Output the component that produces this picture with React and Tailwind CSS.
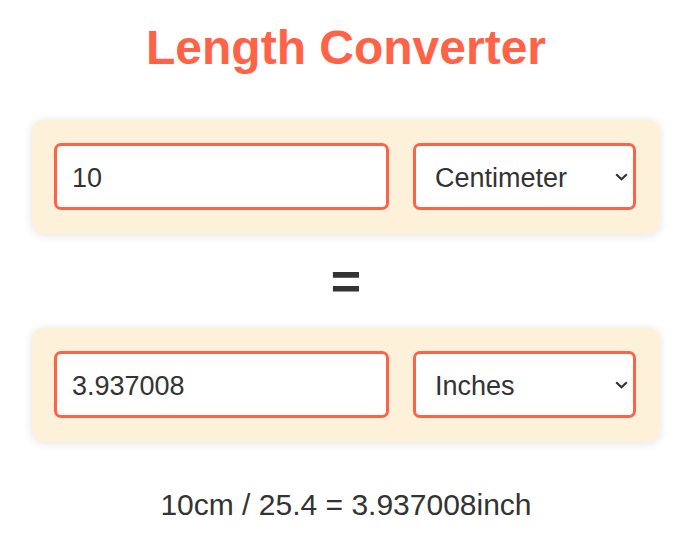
import React, { useState } from "react";

const FACTORS = {
  Centimeter: 1,
  Inches: 2.54,
};

function Chevron() {
  return (
    <svg
      className="pointer-events-none absolute right-[8px] top-1/2 -translate-y-1/2"
      width="13"
      height="8"
      viewBox="0 0 13 8"
      fill="none"
    >
      <path d="M1.2 1.2 L6.5 6.3 L11.8 1.2" stroke="#333" strokeWidth="2.2" />
    </svg>
  );
}

function UnitRow({ value, unit, onValue, onUnit }) {
  return (
    <div className="w-full flex gap-[24px] pl-[22px] pr-[24px] pt-[23px] pb-[24px] rounded-[12px] bg-[#fdf2d9] shadow-[0_1px_10px_rgba(0,0,0,0.12)]">
      <input
        className="w-[335px] h-[67px] border-[3px] border-[#ff6347] rounded-[7px] bg-white px-[15px] pt-[4px] text-[27px] text-[#333] outline-none"
        value={value}
        onChange={(e) => onValue(e.target.value)}
      />
      <div className="relative w-[223px] h-[67px]">
        <select
          className="appearance-none w-full h-full border-[3px] border-[#ff6347] rounded-[7px] bg-white pl-[19px] pr-[30px] pt-[4px] text-[27px] text-[#333] outline-none"
          value={unit}
          onChange={(e) => onUnit(e.target.value)}
        >
          <option value="Centimeter">Centimeter</option>
          <option value="Inches">Inches</option>
        </select>
        <Chevron />
      </div>
    </div>
  );
}

export default function App() {
  const [cm, setCm] = useState("10");
  const [fromUnit, setFromUnit] = useState("Centimeter");
  const [toUnit, setToUnit] = useState("Inches");

  const num = parseFloat(cm) || 0;
  const converted = (num * FACTORS[fromUnit]) / FACTORS[toUnit];
  const shown = String(Number(converted.toFixed(6)));

  return (
    <div className="w-[683px] h-[545px] bg-white font-['Liberation_Sans',Arial,sans-serif] text-[#333]">
      <div className="ml-[32px] w-[628px] flex flex-col items-center">
        <h1 className="pt-[21px] text-[48px] leading-[54px] font-bold text-[#ff6347]">
          Length Converter
        </h1>
        <div className="mt-[45px] w-full">
          <UnitRow value={cm} unit={fromUnit} onValue={setCm} onUnit={setFromUnit} />
        </div>
        <div className="h-[94px] flex items-center justify-center text-[52px] leading-none font-bold text-[#333]">
          =
        </div>
        <UnitRow value={shown} unit={toUnit} onValue={() => {}} onUnit={setToUnit} />
        <p className="mt-[46px] text-[30px] leading-[34px] text-[#333]">
          {cm}cm / 25.4 = {shown}inch
        </p>
      </div>
    </div>
  );
}
